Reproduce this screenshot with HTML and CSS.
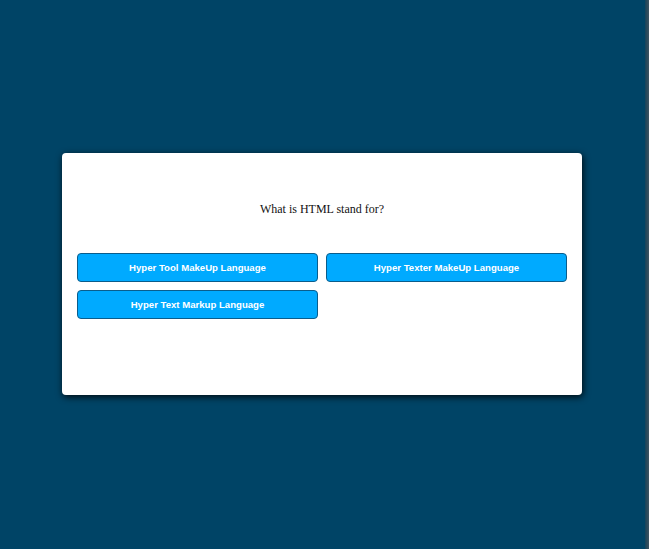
FILE: index.html
```html
<!DOCTYPE html>
<html lang="en">
<head>
<meta charset="utf-8">
<title>Quiz</title>
<link rel="stylesheet" href="styles.css">
</head>
<body>
<main class="stage">
  <section class="card">
    <p class="question">What is HTML stand for?</p>
    <div class="answers">
      <button class="answer">Hyper Tool MakeUp Language</button>
      <button class="answer">Hyper Texter MakeUp Language</button>
      <button class="answer">Hyper Text Markup Language</button>
    </div>
  </section>
</main>
<div class="edge"></div>
</body>
</html>
```

FILE: styles.css
```css
html, body {
  margin: 0;
  height: 100%;
}
body {
  background: #004466;
  font-family: "Liberation Serif", "Times New Roman", serif;
  overflow: hidden;
}
.stage {
  height: 100vh;
  margin-right: 5px;
  display: flex;
  align-items: center;
  justify-content: center;
}
.card {
  width: 520px;
  height: 242px;
  box-sizing: border-box;
  background: #ffffff;
  border-radius: 4px;
  padding: 15px;
  box-shadow: 1px 2px 7px rgba(0, 0, 0, 0.85);
  margin-top: -1px;
}
.question {
  margin: 34px 0 0;
  font-size: 12px;
  line-height: 14px;
  text-align: center;
  color: #111111;
}
.answers {
  margin-top: 37px;
  display: grid;
  grid-template-columns: 1fr 1fr;
  gap: 8px;
}
.answer {
  height: 29px;
  box-sizing: border-box;
  background: #00aaff;
  border: 1.5px solid #0a5d8c;
  border-radius: 4px;
  color: #ffffff;
  font-family: "Liberation Sans", Arial, sans-serif;
  font-size: 9.6px;
  font-weight: bold;
  padding: 0;
  cursor: pointer;
}
.edge {
  position: fixed;
  top: 0;
  right: 0;
  width: 4px;
  height: 100%;
  background: linear-gradient(to right, #16435a, #3d5360);
}
```
